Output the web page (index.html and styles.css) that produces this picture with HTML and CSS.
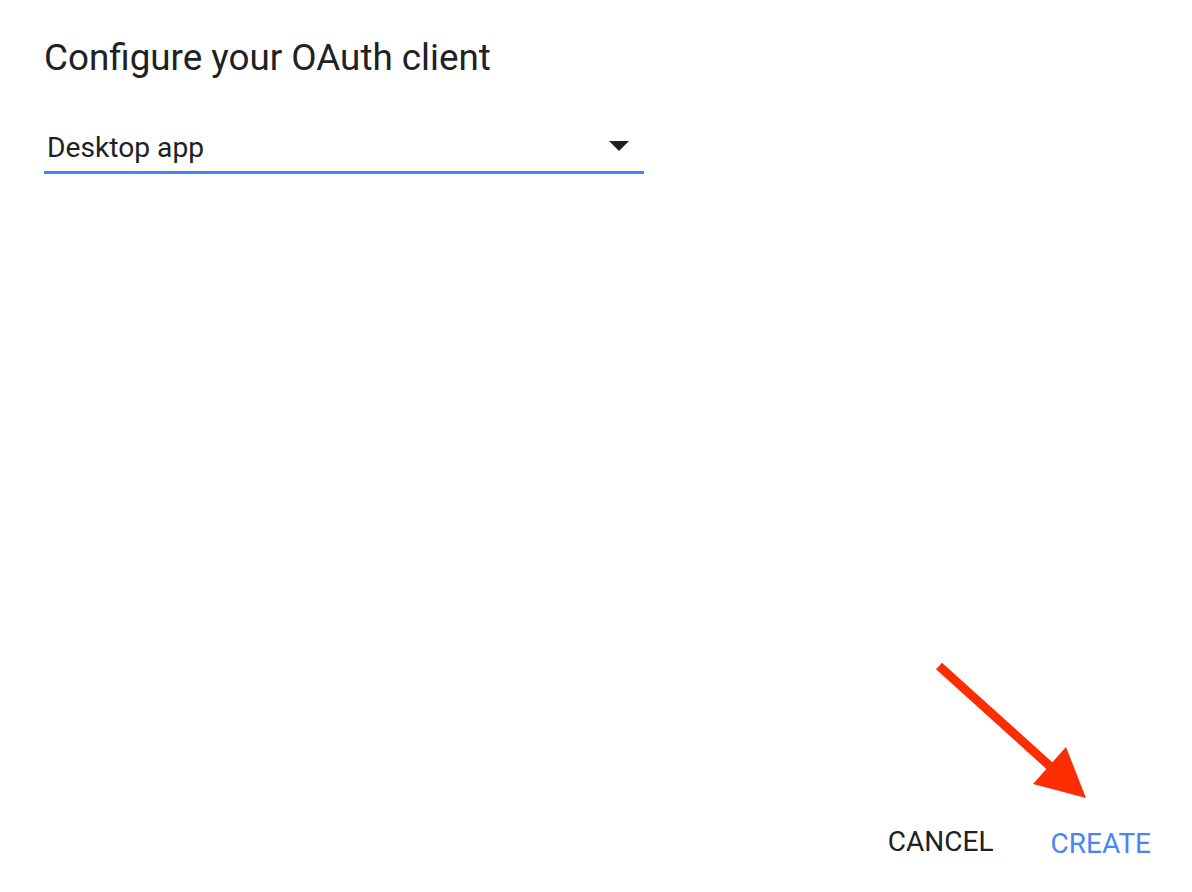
FILE: index.html
```html
<!DOCTYPE html>
<html lang="en">
<head>
<meta charset="utf-8">
<title>Configure your OAuth client</title>
<link rel="stylesheet" href="styles.css">
</head>
<body>
<div class="dialog">
  <h1 class="title">Configure your OAuth client</h1>
  <div class="select">
    <span class="select-value">Desktop app</span>
    <span class="select-caret"></span>
  </div>
  <div class="actions">
    <button class="btn btn-cancel">CANCEL</button>
    <button class="btn btn-create">CREATE</button>
  </div>
  <svg class="callout-arrow" width="180" height="160" viewBox="0 0 180 160" aria-hidden="true">
    <line x1="19" y1="16" x2="132" y2="118" stroke="#fc2d00" stroke-width="9"/>
    <polygon points="146,97 113,134 166,148" fill="#fc2d00"/>
  </svg>
</div>
</body>
</html>
```

FILE: styles.css
```css
* { box-sizing: border-box; }
html, body {
  margin: 0;
  padding: 0;
  background: #ffffff;
}
body {
  font-family: Roboto, "Liberation Sans", Arial, sans-serif;
  color: #202124;
}
.dialog {
  position: relative;
  height: 892px;
  display: flex;
  flex-direction: column;
  padding: 36px 41px 30px 44px;
}
.title {
  margin: 0;
  font-size: 36.8px;
  font-weight: 400;
  line-height: 44px;
  color: #202124;
}
.select {
  margin-top: 50px;
  width: 600px;
  display: flex;
  align-items: center;
  justify-content: space-between;
  padding: 0 15px 5px 3px;
  border-bottom: 3px solid #4285f4;
}
.select-value {
  font-size: 28.2px;
  line-height: 36px;
  color: #202124;
}
.select-caret {
  width: 0;
  height: 0;
  border-left: 10px solid transparent;
  border-right: 10px solid transparent;
  border-top: 10px solid #202124;
  margin-bottom: 4px;
}
.actions {
  margin-top: auto;
  display: flex;
  justify-content: flex-end;
  align-items: flex-start;
  gap: 57px;
}
.btn {
  background: none;
  border: none;
  padding: 0;
  margin: 0;
  font-family: Roboto, "Liberation Sans", Arial, sans-serif;
  font-size: 28px;
  font-weight: 400;
  line-height: 36px;
  cursor: pointer;
}
.btn-cancel { color: #202124; }
.btn-create {
  color: #4a86f0;
  margin-top: 2px;
}
.callout-arrow {
  position: absolute;
  left: 920px;
  top: 650px;
}
```
